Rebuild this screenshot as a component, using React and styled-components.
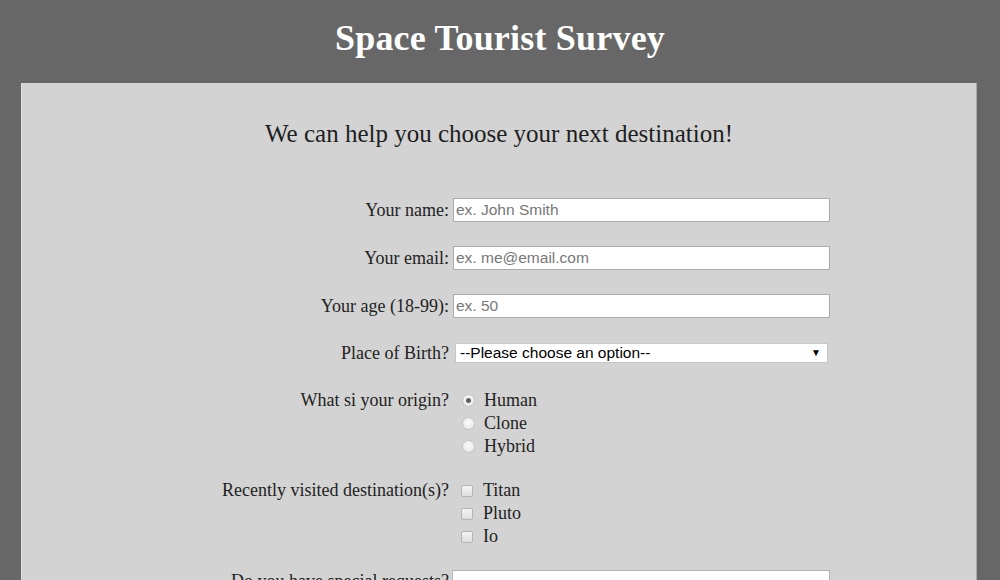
import React from "react";
import styled, { createGlobalStyle } from "styled-components";

const GlobalStyle = createGlobalStyle`
  html, body {
    margin: 0;
    padding: 0;
    background: #676767;
    font-family: "Liberation Serif", "DejaVu Serif", serif;
  }
`;

const Header = styled.header`
  height: 83px;
  display: flex;
  align-items: center;
  justify-content: center;
`;

const Title = styled.h1`
  margin: 0;
  padding-bottom: 8px;
  color: #ffffff;
  font-size: 36px;
  font-weight: bold;
  letter-spacing: 0.2px;
`;

const Card = styled.main`
  margin: 0 24px 0 22px;
  min-height: 600px;
  padding-top: 36px;
  background: #d3d3d3;
  box-shadow: -1px 0 0 #dcdcdc, 1px 0 0 #a9a9a9;
`;

const Subtitle = styled.h2`
  margin: 0;
  line-height: 30px;
  text-align: center;
  font-size: 25px;
  font-weight: normal;
  color: #1e1e1e;
`;

const Form = styled.form`
  display: flex;
  flex-direction: column;
  padding-top: 49px;
`;

const Row = styled.div`
  display: grid;
  grid-template-columns: 427px auto;
  column-gap: ${(p) => (p.$wide ? 12 : 4)}px;
  align-items: ${(p) => (p.$top ? "start" : "center")};
  margin-top: ${(p) => p.$gap || 0}px;
`;

const Label = styled.label`
  text-align: right;
  font-size: 18px;
  line-height: 23px;
  color: #222;
  white-space: nowrap;
`;

const TextInput = styled.input`
  box-sizing: border-box;
  width: 377px;
  height: 24px;
  margin: 0;
  padding: 0 2px;
  border: 1px solid #ababab;
  background: #fff;
  font-family: "Liberation Sans", Arial, sans-serif;
  font-size: 15.5px;
  color: #222;
  outline: none;

  &::placeholder {
    color: #777;
  }
`;

const SelectWrap = styled.div`
  position: relative;
  width: 373px;
  margin: -2px 0 0 2px;

  &::after {
    content: "▼";
    position: absolute;
    right: 7px;
    top: 3px;
    font-size: 10px;
    line-height: 14px;
    color: #000;
    pointer-events: none;
  }
`;

const Select = styled.select`
  appearance: none;
  box-sizing: border-box;
  width: 100%;
  height: 20px;
  margin: 0;
  padding: 0 4px;
  border: 1px solid #c8c8c8;
  border-radius: 0;
  background: #fff;
  font-family: "Liberation Sans", Arial, sans-serif;
  font-size: 15.5px;
  color: #000;
  outline: none;
`;

const Options = styled.div`
  display: flex;
  flex-direction: column;
`;

const Option = styled.label`
  display: flex;
  align-items: center;
  gap: ${(p) => (p.$check ? 10 : 9)}px;
  height: 23px;
  font-size: 18px;
  color: #222;
`;

const Radio = styled.input.attrs({ type: "radio" })`
  appearance: none;
  box-sizing: border-box;
  width: 13px;
  height: 13px;
  margin: 0 0 0 1px;
  border-radius: 50%;
  border: 1px solid #c4c4c4;
  background: radial-gradient(circle at 50% 40%, #fafafa 0%, #e4e4e4 100%);
  display: grid;
  place-items: center;

  &:checked::before {
    content: "";
    width: 5px;
    height: 5px;
    border-radius: 50%;
    background: #606060;
  }
`;

const Check = styled.input.attrs({ type: "checkbox" })`
  appearance: none;
  box-sizing: border-box;
  width: 12px;
  height: 12px;
  margin: 0;
  border-radius: 2px;
  border: 1px solid #b4b4b4;
  background: linear-gradient(#f4f4f4, #dedede);
`;

const TextArea = styled.textarea`
  box-sizing: border-box;
  width: 378px;
  height: 90px;
  margin: 0 0 0 -1px;
  padding: 7px 4px 4px;
  border: 1px solid #b4b4b4;
  background: #fff;
  resize: none;
  font-family: "Liberation Sans", Arial, sans-serif;
  font-size: 15px;
  outline: none;

  &::placeholder {
    color: #777;
  }
`;

export default function App() {
  return (
    <>
      <GlobalStyle />
      <Header>
        <Title>Space Tourist Survey</Title>
      </Header>
      <Card>
        <Subtitle>We can help you choose your next destination!</Subtitle>
        <Form onSubmit={(e) => e.preventDefault()}>
          <Row>
            <Label htmlFor="name">Your name:</Label>
            <TextInput id="name" placeholder="ex. John Smith" />
          </Row>
          <Row $gap={24}>
            <Label htmlFor="email">Your email:</Label>
            <TextInput id="email" placeholder="ex. me@email.com" />
          </Row>
          <Row $gap={24}>
            <Label htmlFor="age">Your age (18-99):</Label>
            <TextInput id="age" placeholder="ex. 50" />
          </Row>
          <Row $gap={24}>
            <Label htmlFor="birth">Place of Birth?</Label>
            <SelectWrap>
              <Select id="birth" defaultValue="">
                <option value="">--Please choose an option--</option>
                <option value="earth">Earth</option>
                <option value="mars">Mars</option>
              </Select>
            </SelectWrap>
          </Row>
          <Row $gap={24} $top $wide>
            <Label>What si your origin?</Label>
            <Options>
              <Option>
                <Radio name="origin" defaultChecked /> Human
              </Option>
              <Option>
                <Radio name="origin" /> Clone
              </Option>
              <Option>
                <Radio name="origin" /> Hybrid
              </Option>
            </Options>
          </Row>
          <Row $gap={21} $top $wide>
            <Label>Recently visited destination(s)?</Label>
            <Options>
              <Option $check>
                <Check /> Titan
              </Option>
              <Option $check>
                <Check /> Pluto
              </Option>
              <Option $check>
                <Check /> Io
              </Option>
            </Options>
          </Row>
          <Row $gap={22} $top>
            <Label htmlFor="requests">Do you have special requests?</Label>
            <TextArea id="requests" placeholder="Tell us all about it..." />
          </Row>
        </Form>
      </Card>
    </>
  );
}
